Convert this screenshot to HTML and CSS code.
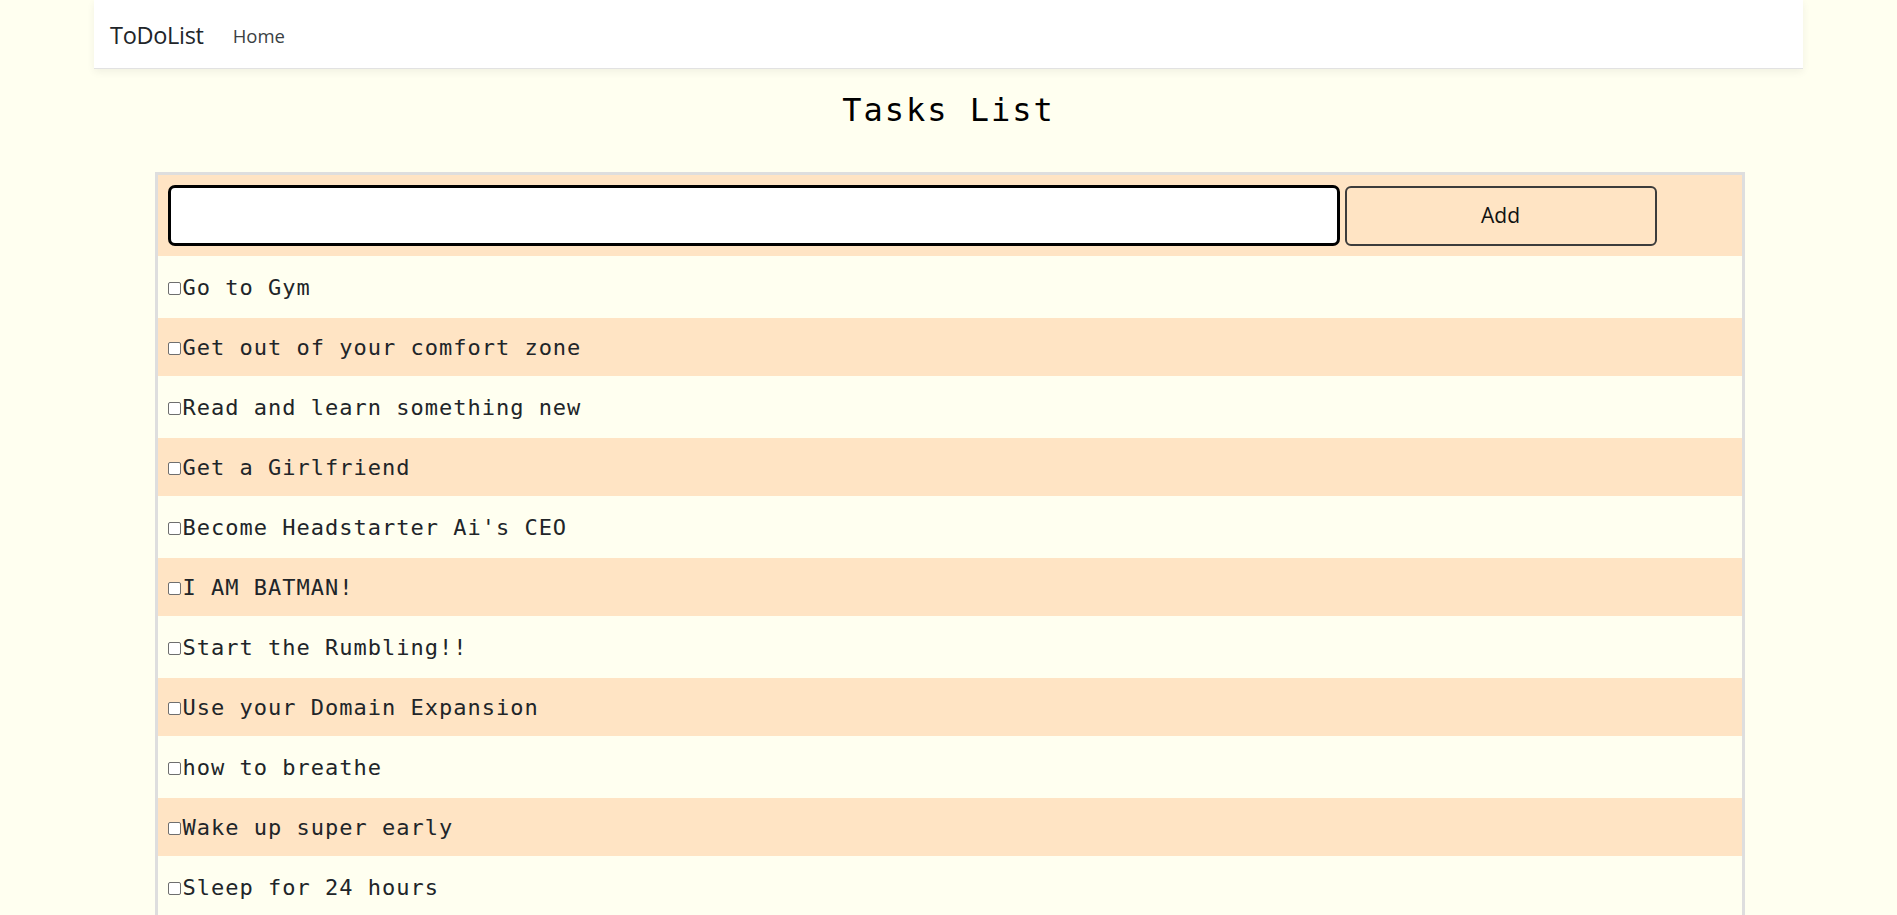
FILE: index.html
```html
<!DOCTYPE html>
<html lang="en">
<head>
<meta charset="utf-8">
<title>ToDoList</title>
<link rel="stylesheet" href="styles.css">
</head>
<body>
<nav class="navbar">
  <span class="brand">ToDoList</span>
  <a class="nav-link" href="#">Home</a>
</nav>
<h1 class="title">Tasks List</h1>
<div class="tasks">
  <div class="add-row">
    <input class="task-input" type="text">
    <button class="add-btn">Add</button>
  </div>
  <div class="task"><input type="checkbox" class="check"><span>Go to Gym</span></div>
  <div class="task"><input type="checkbox" class="check"><span>Get out of your comfort zone</span></div>
  <div class="task"><input type="checkbox" class="check"><span>Read and learn something new</span></div>
  <div class="task"><input type="checkbox" class="check"><span>Get a Girlfriend</span></div>
  <div class="task"><input type="checkbox" class="check"><span>Become Headstarter Ai's CEO</span></div>
  <div class="task"><input type="checkbox" class="check"><span>I AM BATMAN!</span></div>
  <div class="task"><input type="checkbox" class="check"><span>Start the Rumbling!!</span></div>
  <div class="task"><input type="checkbox" class="check"><span>Use your Domain Expansion</span></div>
  <div class="task"><input type="checkbox" class="check"><span>how to breathe</span></div>
  <div class="task"><input type="checkbox" class="check"><span>Wake up super early</span></div>
  <div class="task"><input type="checkbox" class="check"><span>Sleep for 24 hours</span></div>
</div>
</body>
</html>
```

FILE: styles.css
```css
html, body {
  margin: 0;
  padding: 0;
  background: #fffff0;
}

body {
  font-family: "Open Sans", "Noto Sans", sans-serif;
  color: #212529;
}

.navbar {
  width: 1709px;
  height: 69px;
  margin: 0 auto;
  box-sizing: border-box;
  background: #ffffff;
  border-bottom: 1px solid #e2e2e2;
  box-shadow: 0 3px 8px rgba(0, 0, 0, 0.06);
  display: flex;
  align-items: center;
  gap: 29px;
  padding: 2px 16px 0 16px;
}

.brand {
  font-size: 23.5px;
  color: #212529;
  letter-spacing: -0.3px;
}

.nav-link {
  font-size: 18.5px;
  color: #3a3f44;
  text-decoration: none;
}

.title {
  margin: 22px 0 0 0;
  height: 38px;
  line-height: 38px;
  text-align: center;
  font-family: "DejaVu Sans Mono", monospace;
  font-weight: normal;
  font-size: 32px;
  letter-spacing: 2px;
  color: #000;
}

.tasks {
  width: 1590px;
  margin: 43px auto 20px auto;
  position: relative;
  left: 1px;
  box-sizing: border-box;
  border: 3px solid #dedede;
  background: #fffff0;
  display: flex;
  flex-direction: column;
  gap: 2px;
}

.add-row {
  background: #ffe4c4;
  padding: 10px;
  display: flex;
  align-items: flex-end;
  gap: 5px;
}

.task-input {
  width: 1172px;
  height: 61px;
  box-sizing: border-box;
  border: 3px solid #000;
  border-radius: 7px;
  background: #fff;
  margin: 0;
  outline: none;
}

.add-btn {
  width: 312px;
  height: 60px;
  box-sizing: border-box;
  border: 2px solid #3c3c3c;
  border-radius: 6px;
  background: #ffe4c4;
  font-family: "Open Sans", "Noto Sans", sans-serif;
  font-size: 21px;
  color: #111;
  margin: 0;
  padding: 0 0 3px 0;
}

.task {
  height: 58px;
  padding: 0 10px;
  display: flex;
  align-items: center;
  background: #fffff0;
  font-family: "DejaVu Sans Mono", monospace;
  font-size: 22px;
  letter-spacing: 1px;
  color: #212529;
}

.task:nth-child(odd) {
  background: #ffe4c4;
}

.check {
  appearance: none;
  -webkit-appearance: none;
  width: 13px;
  height: 13px;
  box-sizing: border-box;
  border: 1px solid #6e6e6e;
  border-radius: 2px;
  background: #fff;
  margin: 2px 2px 0 0;
  flex-shrink: 0;
}
```
